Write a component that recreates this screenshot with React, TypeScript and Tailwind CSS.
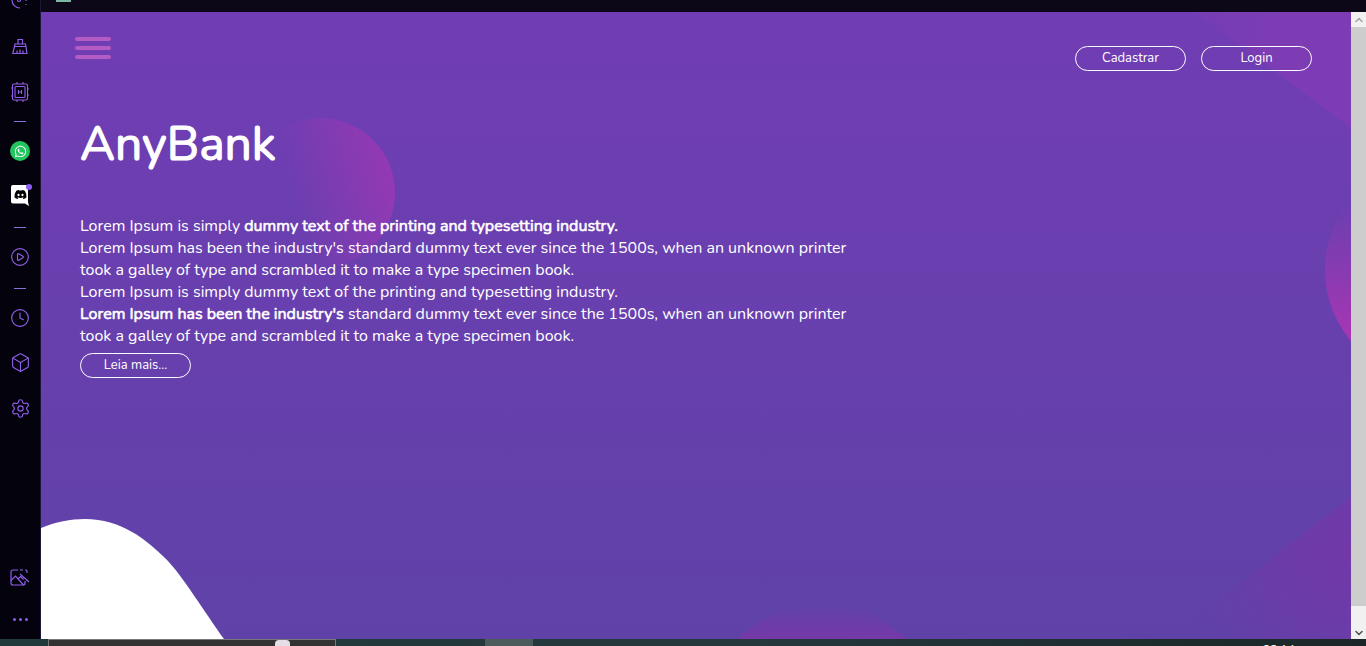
import { Clock, Box, Settings, ChevronUp, ChevronDown, CirclePlay } from 'lucide-react';
import { FaWhatsapp, FaDiscord } from 'react-icons/fa';

const iconColor = 'text-[#8f5fe8]';

function Divider() {
  return <div className="w-3 h-px bg-[#8b6fd8]" />;
}

function BroomIcon() {
  return (
    <svg width="16" height="16" viewBox="0 0 16 16" fill="none" stroke="currentColor" strokeWidth="1.2" className={iconColor}>
      <path d="M6 6V1.500h4.500V6" />
      <path d="M3 6h10.500l1.500 9.500H.8z" />
      <path d="M3 8.500h11M5 15.500v-3M8 15.500v-4M11 15.500v-3" />
    </svg>
  );
}

function ChipIcon() {
  return (
    <svg width="18" height="20" viewBox="0 0 18 20" fill="none" stroke="currentColor" strokeWidth="1.1" className={iconColor}>
      <rect x="1.500" y="2" width="15" height="16" rx="1.500" />
      <rect x="4" y="4.500" width="10" height="11" rx="1" />
      <path d="M7.500 8v4M10.500 8v4M7.500 10h3M6 0v2M12 0v2M6 18v2M12 18v2M0 6h1.500M0 14h1.500M16.500 7h1.500M16.500 13h1.500" />
    </svg>
  );
}

function PhotoIcon() {
  return (
    <svg width="20" height="17" viewBox="0 0 20 17" fill="none" stroke="currentColor" strokeWidth="1.2" className={iconColor}>
      <path d="M8 1H3a2 2 0 0 0-2 2v11a2 2 0 0 0 2 2h10a2 2 0 0 0 2-2v-2" />
      <path d="M1 11.500l4.500-4.500 8 9M8 10l2.500-2.500 3 3M10 1h3M15 1h1a1 1 0 0 1 1 1v2M10 5l9 8" />
    </svg>
  );
}

function DiscordBubble() {
  return (
    <div className="mt-[24px] relative w-[18px] h-[21px] flex items-center justify-center shrink-0">
      <svg className="absolute inset-0" width="18" height="21" viewBox="0 0 18 21" fill="#ffffff">
        <path d="M2 0h13a2 2 0 0 1 2 2v15l1 4-4-2.500H2a2 2 0 0 1-2-2V2a2 2 0 0 1 2-2z" />
      </svg>
      <FaDiscord className="relative text-black -mt-[2px]" size={13} />
      <span className="absolute -top-[1px] -right-[3px] w-[6px] h-[6px] rounded-full bg-[#8b5cf6]" />
    </div>
  );
}

function Sidebar() {
  return (
    <aside className="w-[41px] h-full shrink-0 bg-[#04020d] border-r border-[#1d1638] flex flex-col items-center overflow-hidden">
      <svg width="20" height="10" viewBox="0 0 20 10" fill="none" stroke="currentColor" strokeWidth="1.2" className={`${iconColor} shrink-0`}>
        <path d="M2 0c0 5 4 8 8 8" />
        <circle cx="9" cy="0" r="1.500" />
        <path d="M16 0v1M16 4v1" />
      </svg>
      <div className="mt-[28px] shrink-0"><BroomIcon /></div>
      <div className="mt-[28px] shrink-0"><ChipIcon /></div>
      <div className="mt-[19px] shrink-0"><Divider /></div>
      <div className="mt-[19px] w-5 h-5 rounded-full bg-[#22c55e] flex items-center justify-center shrink-0">
        <FaWhatsapp className="text-white" size={13} />
      </div>
      <DiscordBubble />
      <div className="mt-[21px] shrink-0"><Divider /></div>
      <CirclePlay className={`${iconColor} mt-[19px] shrink-0`} size={20} strokeWidth={1.4} />
      <div className="mt-[21px] shrink-0"><Divider /></div>
      <Clock className={`${iconColor} mt-[19px] shrink-0`} size={20} strokeWidth={1.4} />
      <Box className={`${iconColor} mt-[24px] shrink-0`} size={21} strokeWidth={1.3} />
      <Settings className={`${iconColor} mt-[25px] shrink-0`} size={21} strokeWidth={1.3} />
      <div className="mt-[150px] shrink-0"><PhotoIcon /></div>
      <div className="mt-[32px] flex gap-[3px] shrink-0">
        <span className="w-[3px] h-[3px] rounded-full bg-[#8b5cf6]" />
        <span className="w-[3px] h-[3px] rounded-full bg-[#8b5cf6]" />
        <span className="w-[3px] h-[3px] rounded-full bg-[#8b5cf6]" />
      </div>
    </aside>
  );
}

function PillButton({ label, className }: { label: string; className: string }) {
  return (
    <button className={`h-[25px] border border-white rounded-full text-white text-[13px] leading-none ${className}`}>
      {label}
    </button>
  );
}

function Backdrop() {
  return (
    <>
      <div className="absolute left-[204px] top-[106px] w-[150px] h-[150px] rounded-full bg-[linear-gradient(75deg,rgba(120,60,176,0)_35%,#9a38b4_100%)]" />
      <div className="absolute left-[1284px] top-[148px] w-[220px] h-[220px] rounded-full bg-[linear-gradient(to_bottom,rgba(122,60,176,0)_20%,#a836b4_82%)]" />
      <div className="absolute left-[1154px] top-0 w-[156px] h-[116px] [clip-path:polygon(0_0,100%_0,100%_100%)] bg-[linear-gradient(to_right,rgba(125,60,180,0.4),#7d3cb4_60%)]" />
      <div className="absolute left-[658px] top-[593px] w-[246px] h-[246px] rounded-full bg-[linear-gradient(to_bottom,rgba(122,56,168,0)_0%,#7838a8_15%)]" />
      <div className="absolute left-[1126px] top-[485px] w-[184px] h-[142px] [clip-path:polygon(100%_0,100%_100%,0_100%)] bg-[radial-gradient(circle_at_100%_40%,#7238a8_0%,rgba(114,56,168,0)_85%)]" />
      <svg className="absolute left-0 bottom-0" width="183" height="120" viewBox="0 0 183 120" fill="none">
        <path d="M0 9C14 3 30 0 44 0C80 0 105 20 126 41C140 55 165 95 183 120H0Z" fill="#ffffff" />
      </svg>
    </>
  );
}

export default function App() {
  return (
    <div className="w-[1366px] h-[646px] overflow-hidden flex flex-col bg-[#04020d] font-['Nunito','Noto_Sans',sans-serif]">
      <div className="flex flex-1 min-h-0">
        <Sidebar />
        <div className="flex-1 min-w-0 flex flex-col">
          <div className="h-3 shrink-0 bg-[#0c0818] pl-[15px]">
            <div className="w-[15px] h-[2px] bg-[#7fb5a5]" />
          </div>
          <div className="flex-1 min-h-0 flex">
            <main className="relative flex-1 min-w-0 overflow-hidden bg-[linear-gradient(to_bottom,#713db4,#5f42a8)]">
              <Backdrop />
              <div className="relative px-[39px]">
                <header className="flex items-start justify-between">
                  <div className="mt-[25px] -ml-[5px] flex flex-col gap-[5px]">
                    <span className="block w-9 h-[4px] rounded-full bg-[#b45cc4]" />
                    <span className="block w-9 h-[4px] rounded-full bg-[#b45cc4]" />
                    <span className="block w-9 h-[4px] rounded-full bg-[#b45cc4]" />
                  </div>
                  <div className="mt-[34px] flex gap-[15px]">
                    <PillButton label="Cadastrar" className="w-[111px]" />
                    <PillButton label="Login" className="w-[111px]" />
                  </div>
                </header>
                <h1 className="mt-[40px] text-[48px] leading-[66px] font-normal text-white [-webkit-text-stroke:1.2px_white]">AnyBank</h1>
                <div className="mt-[38px] w-[790px] text-[16px] leading-[22px] text-white">
                  <p>Lorem Ipsum is simply <span className="[-webkit-text-stroke:0.6px_white]">dummy text of the printing and typesetting industry.</span></p>
                  <p>Lorem Ipsum has been the industry's standard dummy text ever since the 1500s, when an unknown printer took a galley of type and scrambled it to make a type specimen book.</p>
                  <p>Lorem Ipsum is simply dummy text of the printing and typesetting industry.</p>
                  <p><span className="[-webkit-text-stroke:0.6px_white]">Lorem Ipsum has been the industry's</span> standard dummy text ever since the 1500s, when an unknown printer took a galley of type and scrambled it to make a type specimen book.</p>
                </div>
                <PillButton label="Leia mais..." className="mt-[6px] w-[111px]" />
              </div>
            </main>
            <div className="w-[15px] shrink-0 bg-[#cdcdcd] flex flex-col justify-between">
              <div className="h-[15px] bg-[#f1f1f1] flex items-center justify-center">
                <ChevronUp size={12} strokeWidth={3} className="text-[#a3a3a3]" />
              </div>
              <div className="h-[33px] bg-[#f1f1f1] flex items-end justify-center">
                <ChevronDown size={12} strokeWidth={3} className="text-[#505050]" />
              </div>
            </div>
          </div>
        </div>
      </div>
      <footer className="h-[7px] shrink-0 overflow-hidden bg-[linear-gradient(to_right,#203a3c,#24393b_55%,#1b2628_100%)] flex">
        <div className="ml-[48px] w-[288px] bg-[#333333] border-x border-t border-[#777777] pl-[226px]">
          <div className="w-[15px] h-[6px] rounded-t-[4px] bg-[#e6dfe8]" />
        </div>
        <div className="ml-[149px] w-[48px] bg-[#4c5c5c]" />
        <div className="ml-[730px] pt-[5px] text-[12px] leading-[12px] text-white font-semibold">22:14</div>
      </footer>
    </div>
  );
}
